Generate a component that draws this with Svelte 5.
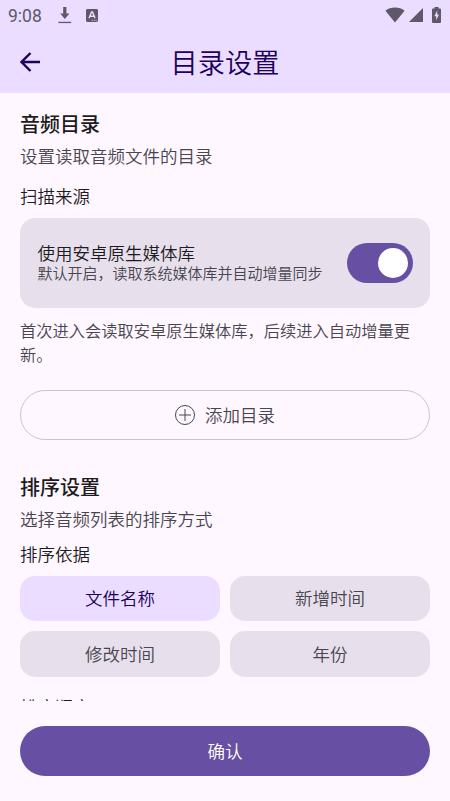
<script>
  const sortOptions = [
    { key: 'name', label: '文件名称' },
    { key: 'added', label: '新增时间' },
    { key: 'modified', label: '修改时间' },
    { key: 'year', label: '年份' }
  ];

  let sortBy = $state('name');
  let useMediaStore = $state(true);
</script>

<div class="screen">
  <header>
    <div class="status-bar">
      <span class="time">9:08</span>
      <svg class="download" width="14" height="18" viewBox="0 0 14 18">
        <path d="M5.2 0h3.2v6.5h3.1L6.8 12 2.2 6.5h3z" />
        <path d="M.4 14.8h12.8v1.3H.4z" />
      </svg>
      <svg class="keyboard" width="12" height="13" viewBox="0 0 12 13">
        <rect width="12" height="13" rx="1.4" />
        <path d="M3 9.2L5.6 3h.9L9.1 9.2M4 7.2h4" fill="none" stroke="#eaddff" stroke-width="1.4" />
        <path d="M5.8 11.3h1M7.7 11.3h1M9.6 11.3h1" stroke="#eaddff" stroke-width=".9" />
      </svg>
      <div class="system">
        <svg width="20" height="16" viewBox="0 0 20 16">
          <path d="M10 15.4L.4 3.7C3 1.7 6.3.6 10 .6s7 1.1 9.6 3.1z" />
        </svg>
        <svg class="signal" width="14" height="14" viewBox="0 0 14 14">
          <path d="M14 0v14H0z" />
        </svg>
        <svg class="battery" width="9" height="16" viewBox="0 0 9 16">
          <path d="M2.5 0h4v1.6H8a1 1 0 0 1 1 1V15a1 1 0 0 1-1 1H1a1 1 0 0 1-1-1V2.6a1 1 0 0 1 1-1h1.5z" />
          <path d="M5.2 3.5L2.4 9.2h1.8v4L7 7.6H5.2z" fill="#eaddff" />
        </svg>
      </div>
    </div>
    <div class="title-bar">
      <button class="back" aria-label="返回">
        <svg width="20" height="20" viewBox="0 0 20 20">
          <path d="M20 10H1.8M10.5 1L1.5 10l9 9" fill="none" stroke="#21005d" stroke-width="2.4" />
        </svg>
      </button>
      <h1>目录设置</h1>
    </div>
  </header>

  <main>
    <section>
      <h2>音频目录</h2>
      <p class="desc">设置读取音频文件的目录</p>
      <h3 class="source-label">扫描来源</h3>
      <div class="card">
        <div>
          <div class="card-title">使用安卓原生媒体库</div>
          <div class="card-sub">默认开启，读取系统媒体库并自动增量同步</div>
        </div>
        <button
          class="switch"
          class:on={useMediaStore}
          role="switch"
          aria-checked={useMediaStore}
          aria-label="使用安卓原生媒体库"
          onclick={() => useMediaStore = !useMediaStore}>
          <span class="thumb"></span>
        </button>
      </div>
      <p class="note">首次进入会读取安卓原生媒体库，后续进入自动增量更新。</p>
      <button class="add">
        <svg width="20" height="20" viewBox="0 0 20 20" fill="none" stroke="#49454f">
          <circle cx="10" cy="10" r="9.5" />
          <path d="M10 4v12M4 10h12" />
        </svg>
        <span>添加目录</span>
      </button>
    </section>

    <section class="sort">
      <h2>排序设置</h2>
      <p class="desc">选择音频列表的排序方式</p>
      <h3>排序依据</h3>
      <div class="options">
        {#each sortOptions as option (option.key)}
          <button
            class="option"
            class:selected={sortBy === option.key}
            onclick={() => sortBy = option.key}>
            {option.label}
          </button>
        {/each}
      </div>
      <h3 class="order-label">排序顺序</h3>
    </section>
  </main>

  <footer>
    <button class="confirm">确认</button>
  </footer>
</div>

<style>
  :global(body) {
    margin: 0;
  }

  .screen {
    display: flex;
    flex-direction: column;
    height: 801px;
    overflow: hidden;
    background: #fef7ff;
    color: #1d1b20;
    font-family: "Noto Sans CJK SC", sans-serif;
    font-size: 17.5px;
    font-weight: 350;
  }

  h1, h2, h3, p {
    margin: 0;
    font-weight: 350;
  }

  button {
    padding: 0;
    border: 0;
    background: none;
    color: inherit;
    font: inherit;
  }

  svg {
    display: block;
    flex: none;
  }

  header {
    flex: none;
    height: 93px;
    background: #eaddff;
  }

  .status-bar {
    display: flex;
    align-items: center;
    height: 31px;
    padding: 0 9px 0 8px;
    fill: #5f5868;
  }

  .time {
    width: 34px;
    color: #5f5868;
    font-family: Roboto, sans-serif;
    font-size: 17.5px;
    font-weight: 400;
  }

  .download {
    margin-left: 16px;
  }

  .keyboard {
    margin-left: 14px;
  }

  .system {
    display: flex;
    align-items: center;
    margin-left: auto;
    padding-bottom: 1px;
  }

  .signal {
    margin-left: 3.5px;
  }

  .battery {
    margin-left: 9.5px;
  }

  .title-bar {
    display: grid;
    grid-template-columns: 20px 1fr 20px;
    align-items: center;
    height: 61px;
    padding: 0 20px;
  }

  h1 {
    padding-bottom: 2px;
    color: #21005d;
    font-size: 27.2px;
    line-height: 40px;
    text-align: center;
  }

  main {
    flex: 1;
    min-height: 0;
    padding: 0 20px;
    overflow: hidden;
  }

  section {
    padding-top: 17px;
  }

  h2 {
    font-size: 20px;
    font-weight: 500;
    line-height: 28px;
  }

  h3 {
    font-size: 17.5px;
    line-height: 24px;
  }

  .desc {
    margin-top: 5px;
    color: #49454f;
    line-height: 26px;
  }

  .source-label {
    margin-top: 15px;
  }

  .card {
    display: flex;
    align-items: center;
    justify-content: space-between;
    box-sizing: border-box;
    height: 90px;
    margin-top: 10px;
    padding: 0 17.5px;
    border-radius: 15px;
    background: #e7e0ec;
  }

  .card-title {
    line-height: 20px;
  }

  .card-sub {
    color: #49454f;
    font-size: 15px;
    line-height: 20px;
  }

  .switch {
    display: flex;
    align-items: center;
    width: 65.5px;
    height: 40px;
    padding: 0 5px;
    border-radius: 20px;
    background: #cac4d0;
  }

  .switch.on {
    justify-content: flex-end;
    background: #6750a4;
  }

  .thumb {
    width: 30px;
    height: 30px;
    border-radius: 50%;
    background: #fff;
  }

  .note {
    margin-top: 10px;
    color: #49454f;
    font-size: 16.25px;
    line-height: 24px;
  }

  .add {
    display: flex;
    align-items: center;
    justify-content: center;
    gap: 10px;
    width: 100%;
    height: 50px;
    margin-top: 24.4px;
    border: 1.25px solid #cac4d0;
    border-radius: 25px;
    color: #49454f;
  }

  .add span,
  .confirm {
    padding-bottom: 2px;
  }

  .sort {
    padding-top: 32.6px;
  }

  .sort .desc {
    margin-top: 5.5px;
  }

  .sort h3 {
    margin-top: 10px;
  }

  .options {
    display: grid;
    grid-template-columns: 1fr 1fr;
    gap: 10px;
    margin-top: 9.5px;
  }

  .option {
    height: 45.5px;
    padding-bottom: 2px;
    border-radius: 15px;
    background: #e7e0ec;
    color: #49454f;
  }

  .option.selected {
    background: #eaddff;
    color: #21005d;
  }

  .sort .order-label {
    margin-top: 18.5px;
  }

  footer {
    flex: none;
    padding: 25px 20px;
  }

  .confirm {
    display: block;
    width: 100%;
    height: 50px;
    border-radius: 25px;
    background: #6750a4;
    color: #fff;
  }
</style>
